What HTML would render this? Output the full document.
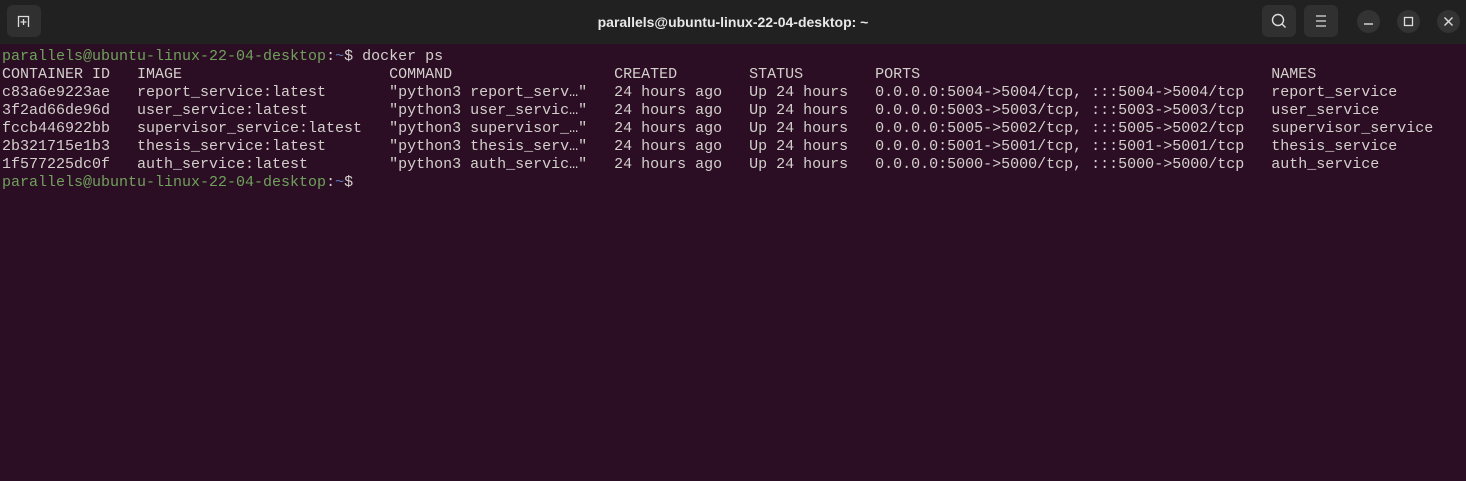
<!DOCTYPE html>
<html><head><style>
body{margin:0;width:1466px;height:481px;background:#2c0e24;overflow:hidden;font-family:"Liberation Sans",sans-serif}
.bar{position:absolute;left:0;top:0;width:1466px;height:44px;background:#212121}
.btn{position:absolute;background:#303030;border-radius:6px}
.circ{position:absolute;width:23px;height:23px;border-radius:50%;background:#333;top:10px}
.title{position:absolute;top:0;left:0;width:1466px;text-align:center;line-height:44px;color:#e8e8e8;font-weight:bold;font-size:14px}
pre{position:absolute;left:2px;top:48px;margin:0;font-family:"Liberation Mono",monospace;font-size:15px;line-height:18px;color:#d3d0cc;letter-spacing:0}
.g{color:#6ea25a}.b{color:#5f7fb8}
</style></head><body>
<div class="bar"></div>
<div class="btn" style="left:7px;top:5px;width:34px;height:32px"><svg width="34" height="32"><path d="M11.5 22V11.5h10V22M16.5 14v6M13.5 17h6" stroke="#ddd" stroke-width="1.3" fill="none"/></svg></div>
<div class="title">parallels@ubuntu-linux-22-04-desktop: ~</div>
<div class="btn" style="left:1262px;top:5px;width:34px;height:32px"><svg width="34" height="32"><circle cx="16" cy="15" r="5.5" stroke="#ddd" stroke-width="1.4" fill="none"/><path d="M20 19l3.5 3.5" stroke="#ddd" stroke-width="1.4"/></svg></div>
<div class="btn" style="left:1304px;top:5px;width:34px;height:32px"><svg width="34" height="32"><path d="M12 11h10M12 16h10M12 21h10" stroke="#ddd" stroke-width="1.3"/></svg></div>
<div class="circ" style="left:1357px"><svg width="23" height="23"><path d="M7 14h9" stroke="#ddd" stroke-width="1.4"/></svg></div>
<div class="circ" style="left:1397px"><svg width="23" height="23"><rect x="7.5" y="7.5" width="8" height="8" stroke="#ddd" stroke-width="1.3" fill="none"/></svg></div>
<div class="circ" style="left:1437px"><svg width="23" height="23"><path d="M7.5 7.5l8 8M15.5 7.5l-8 8" stroke="#ddd" stroke-width="1.4"/></svg></div>
<pre><span class="g">parallels@ubuntu-linux-22-04-desktop</span>:<span class="b">~</span>$ docker ps
CONTAINER ID   IMAGE                       COMMAND                  CREATED        STATUS        PORTS                                       NAMES
c83a6e9223ae   report_service:latest       "python3 report_serv…"   24 hours ago   Up 24 hours   0.0.0.0:5004->5004/tcp, :::5004->5004/tcp   report_service
3f2ad66de96d   user_service:latest         "python3 user_servic…"   24 hours ago   Up 24 hours   0.0.0.0:5003->5003/tcp, :::5003->5003/tcp   user_service
fccb446922bb   supervisor_service:latest   "python3 supervisor_…"   24 hours ago   Up 24 hours   0.0.0.0:5005->5002/tcp, :::5005->5002/tcp   supervisor_service
2b321715e1b3   thesis_service:latest       "python3 thesis_serv…"   24 hours ago   Up 24 hours   0.0.0.0:5001->5001/tcp, :::5001->5001/tcp   thesis_service
1f577225dc0f   auth_service:latest         "python3 auth_servic…"   24 hours ago   Up 24 hours   0.0.0.0:5000->5000/tcp, :::5000->5000/tcp   auth_service
<span class="g">parallels@ubuntu-linux-22-04-desktop</span>:<span class="b">~</span>$ </pre>
</body></html>
